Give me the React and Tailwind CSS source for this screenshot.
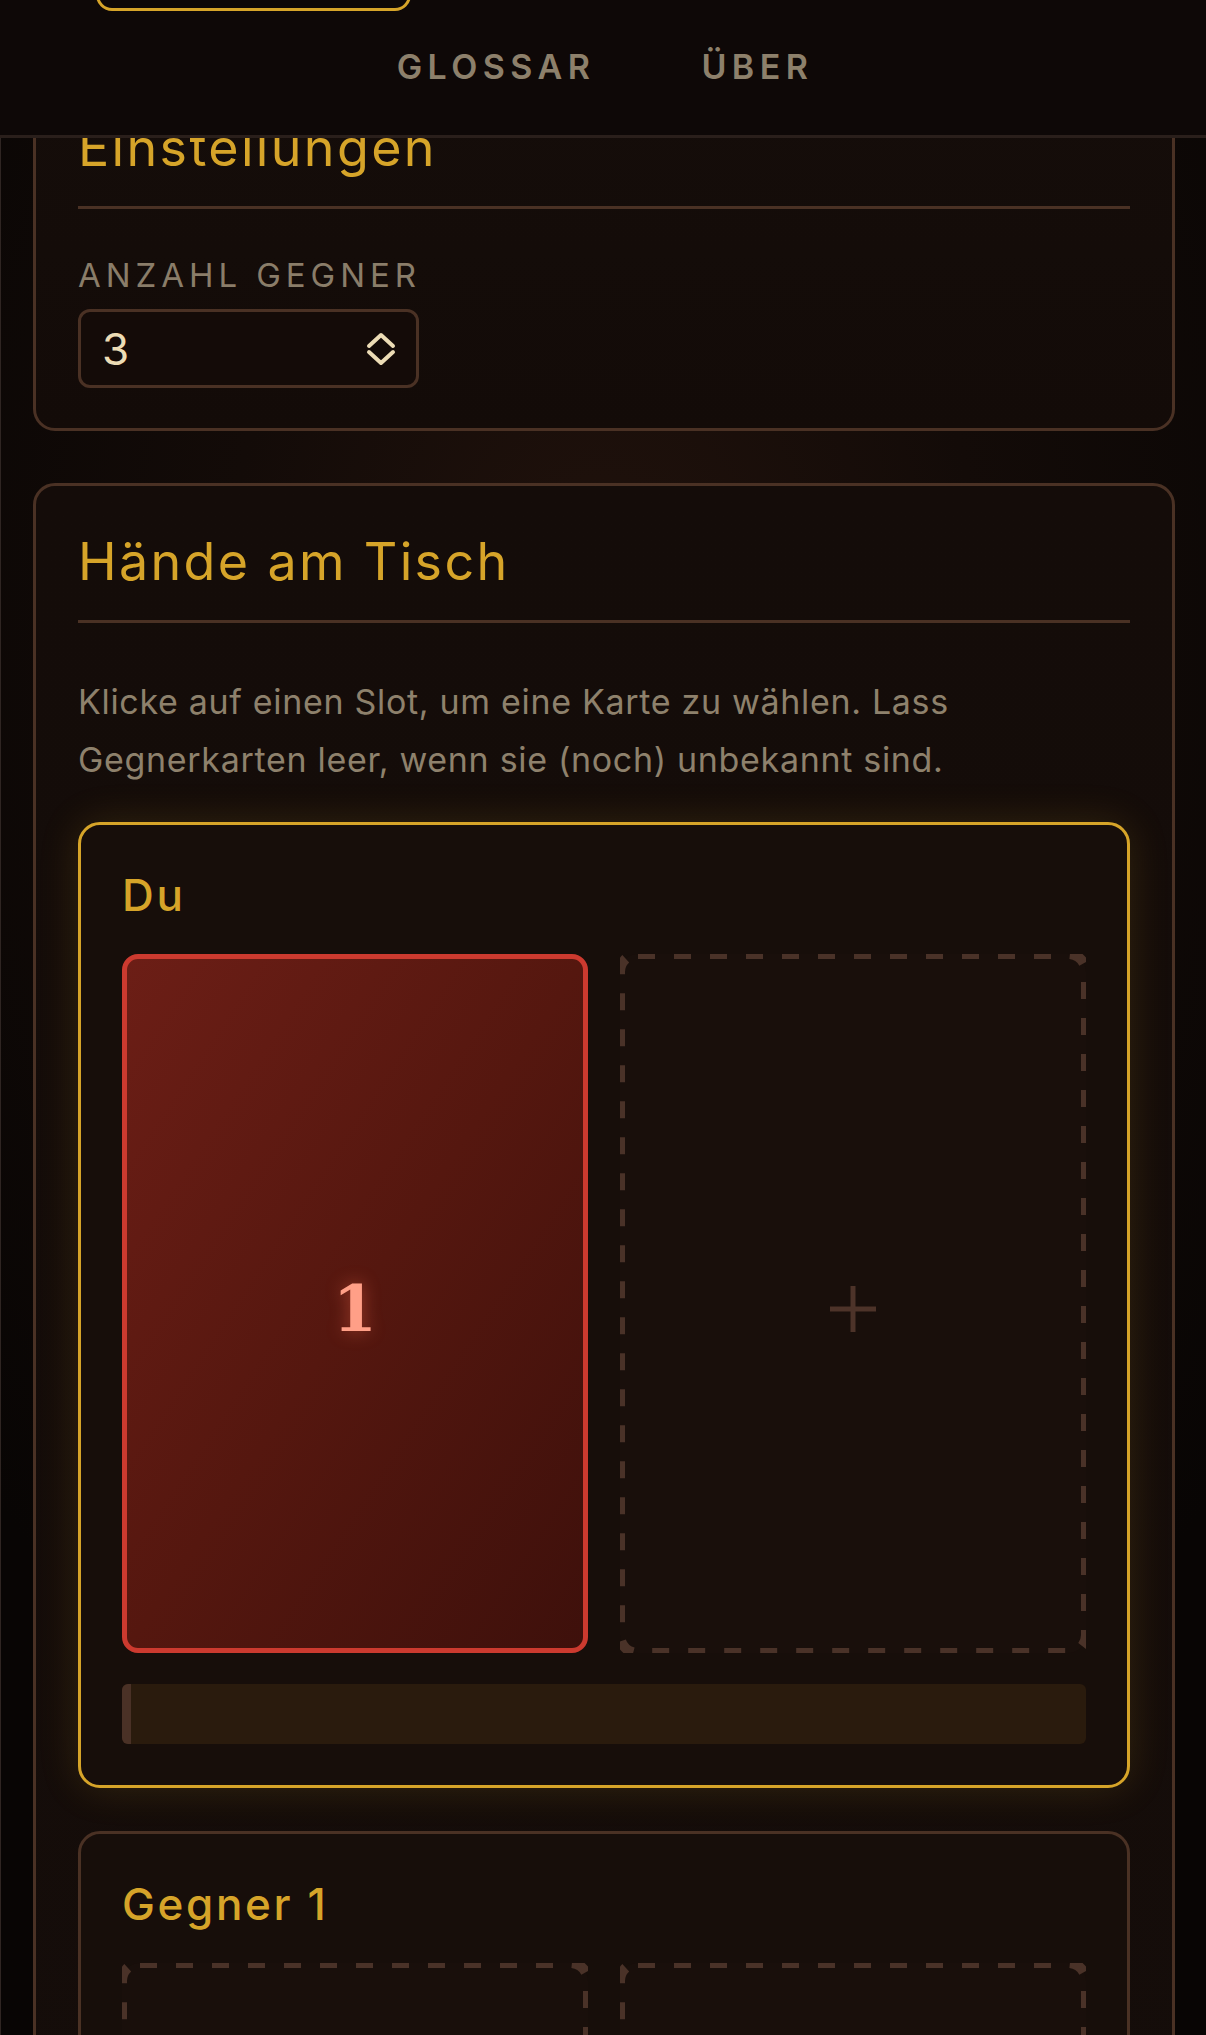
import React from 'react'

const font = "font-['Inter','Noto_Sans',sans-serif]"

// dashed outline drawn as svg so the dash length matches the design
function DashedFrame() {
  return (
    <svg className="pointer-events-none absolute inset-0 h-full w-full" fill="none">
      <rect x="0" y="0" width="100%" height="100%" rx="18" stroke="#4a3228" strokeWidth="10" strokeDasharray="17 19" />
    </svg>
  )
}

function Slot({ dashed, children }) {
  if (!dashed) {
    return (
      <div className="flex aspect-[2/3] items-center justify-center rounded-[16px] border-[5px] border-[#cc3a2f] bg-gradient-to-br from-[#6c1e16] via-[#55170f] to-[#3e100b]">
        {children}
      </div>
    )
  }
  return (
    <div className="relative flex aspect-[2/3] items-center justify-center rounded-[18px] bg-[#190f0b]">
      <DashedFrame />
      {children}
    </div>
  )
}

function Plus() {
  return (
    <svg width="46" height="46" viewBox="0 0 46 46" className="mt-[10px]">
      <path d="M23 0v46M0 23h46" stroke="#4d3329" strokeWidth="5" fill="none" />
    </svg>
  )
}

function Chevrons() {
  return (
    <svg width="30" height="34" viewBox="0 0 30 34" fill="none" stroke="#ecdcb5" strokeWidth="4" strokeLinecap="round" strokeLinejoin="round">
      <polyline points="3,14 15,3 27,14" />
      <polyline points="3,20 15,31 27,20" />
    </svg>
  )
}

function SectionTitle({ children }) {
  return (
    <h2 className="border-b-[3px] border-[#4a3124] pb-[26px] text-[52px] font-normal leading-[64px] tracking-[0.045em] text-[#d6a429]">
      {children}
    </h2>
  )
}

export default function App() {
  return (
    <div className={`relative min-h-screen overflow-hidden border-l border-[#2f2522] bg-[#090504] bg-[radial-gradient(ellipse_70%_45%_at_50%_23%,#21120c_0%,#130b08_45%,#080504_100%)] ${font}`}>
      <header className="fixed inset-x-0 top-0 z-10 h-[138px] overflow-hidden border-b-[3px] border-[#2a1f1b] bg-[#0e0807]">
        <div className="-mt-[50px] ml-[96px] h-[61px] w-[315px] rounded-[16px] border-[3px] border-[#d6a429]" />
        <nav className="mt-[35px] flex justify-center gap-[106px] pl-[4px] text-[34px] font-semibold leading-[42px] tracking-[0.16em] text-[#8d806b]">
          <span>GLOSSAR</span>
          <span>ÜBER</span>
        </nav>
      </header>

      <main className="flex flex-col gap-[52px] pl-[32px] pr-[31px] pt-[69px]">
        <section className="rounded-[22px] border-[3px] border-[#4a3124] bg-gradient-to-b from-[#150d0a] to-[#130b08] px-[42px] pb-[40px] pt-[44px]">
          <SectionTitle>Einstellungen</SectionTitle>
          <div className="mt-[46px] text-[33px] leading-[40px] tracking-[0.15em] text-[#8a7d69]">ANZAHL GEGNER</div>
          <div className="mt-[14px] flex h-[79px] w-[341px] items-center justify-between rounded-[12px] border-[3px] border-[#4a3124] bg-[#140b08] pl-[21px] pr-[20px]">
            <span className="text-[44px] leading-none text-[#ecdcb5]">3</span>
            <Chevrons />
          </div>
        </section>

        <section className="rounded-[22px] border-[3px] border-[#4a3124] bg-gradient-to-b from-[#140c09] to-[#150d0a] px-[42px] pb-[60px] pt-[44px]">
          <SectionTitle>Hände am Tisch</SectionTitle>
          <p className="mt-[50px] text-[34px] leading-[58px] tracking-[0.02em] text-[#8e816c]">
            Klicke auf einen Slot, um eine Karte zu wählen. Lass Gegnerkarten leer, wenn sie (noch) unbekannt sind.
          </p>

          <div className="mt-[33px] rounded-[22px] border-[3px] border-[#d6a429] bg-[#170e0a] p-[41px] shadow-[0_0_40px_rgba(214,164,41,0.16)]">
            <div className="mb-[30px] text-[44px] font-medium leading-[58px] tracking-[0.06em] text-[#d6a429]">Du</div>
            <div className="grid grid-cols-2 gap-[32px]">
              <Slot>
                <span className="mt-[12px] font-['DejaVu_Serif',serif] text-[63px] font-bold leading-none text-[#ff9f87] [text-shadow:0_0_18px_rgba(255,110,80,0.45)]">1</span>
              </Slot>
              <Slot dashed>
                <Plus />
              </Slot>
            </div>
            <div className="mt-[31px] flex h-[60px] overflow-hidden rounded-[6px] bg-[#2a1b0d]">
              <div className="w-[9px] bg-[#4a3126]" />
            </div>
          </div>

          <div className="mt-[43px] rounded-[22px] border-[3px] border-[#4a3124] bg-[#170e0a] p-[41px]">
            <div className="mb-[30px] text-[44px] font-medium leading-[58px] tracking-[0.06em] text-[#d6a429]">Gegner 1</div>
            <div className="grid grid-cols-2 gap-[32px]">
              <Slot dashed>
                <Plus />
              </Slot>
              <Slot dashed>
                <Plus />
              </Slot>
            </div>
          </div>
        </section>
      </main>
    </div>
  )
}
